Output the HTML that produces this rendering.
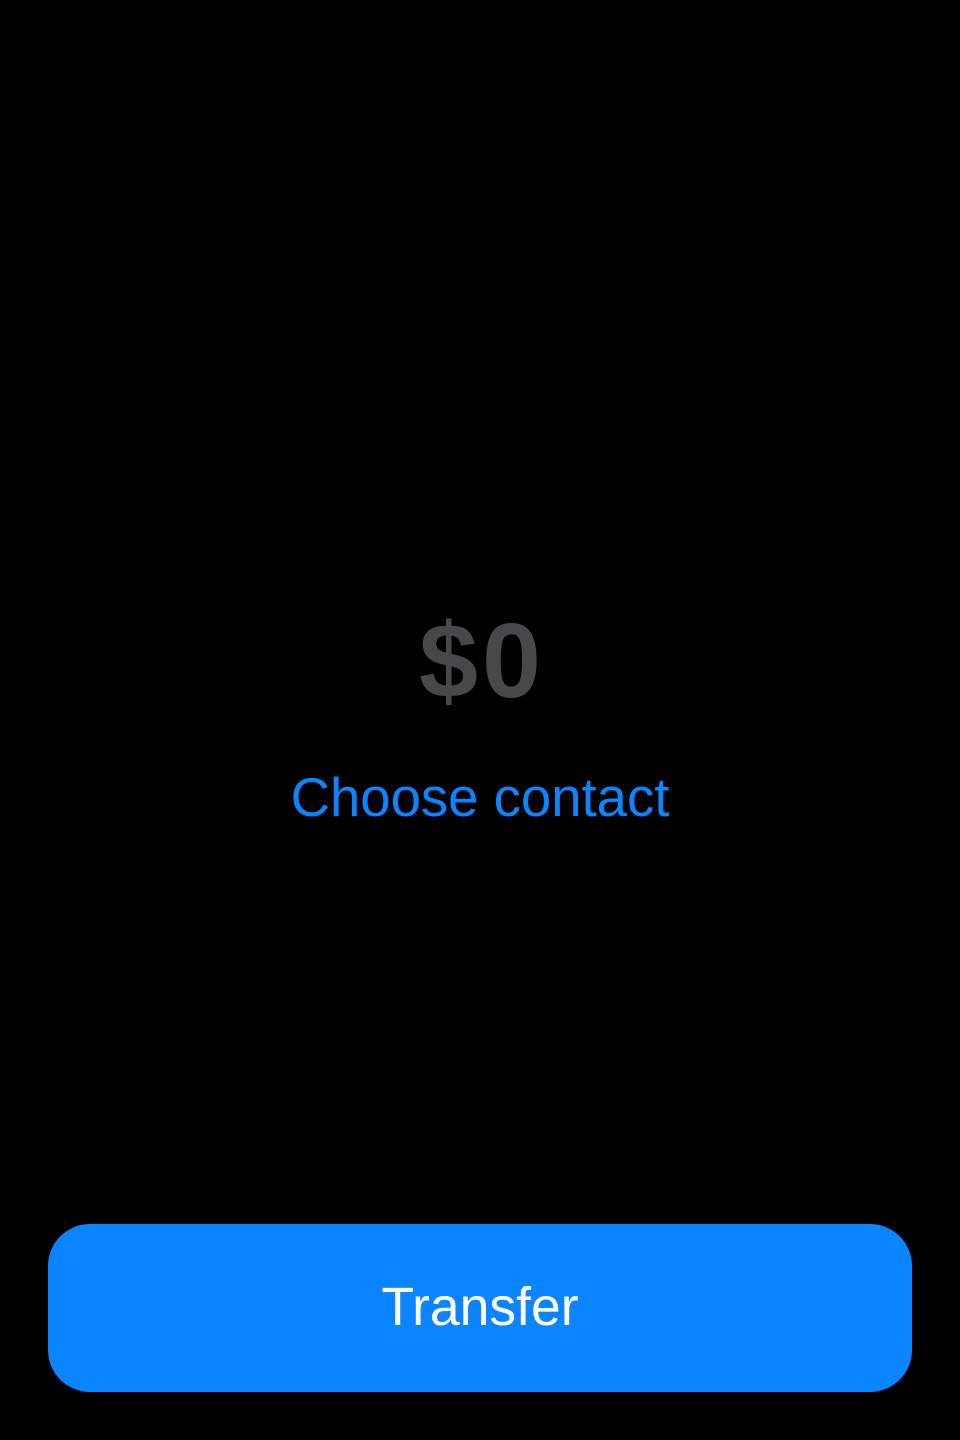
<!DOCTYPE html>
<html><head><style>
html,body{margin:0;padding:0;background:#000;width:960px;height:1440px;overflow:hidden;font-family:"Liberation Sans",sans-serif}
.amt{position:absolute;top:606px;left:0;width:960px;text-align:center;font-size:106px;font-weight:bold;color:#48484a;line-height:110px;letter-spacing:4px;text-indent:4px}
.cc{position:absolute;top:768px;left:0;width:960px;text-align:center;font-size:54.5px;color:#0a84ff;line-height:60px}
.btn{position:absolute;left:48px;top:1224px;width:864px;height:168px;border-radius:42px;background:#0a84ff;color:#fff;font-size:53.5px;text-align:center;line-height:168px}
</style></head><body>
<div class="amt">$0</div>
<div class="cc">Choose contact</div>
<div class="btn">Transfer</div>
</body></html>
